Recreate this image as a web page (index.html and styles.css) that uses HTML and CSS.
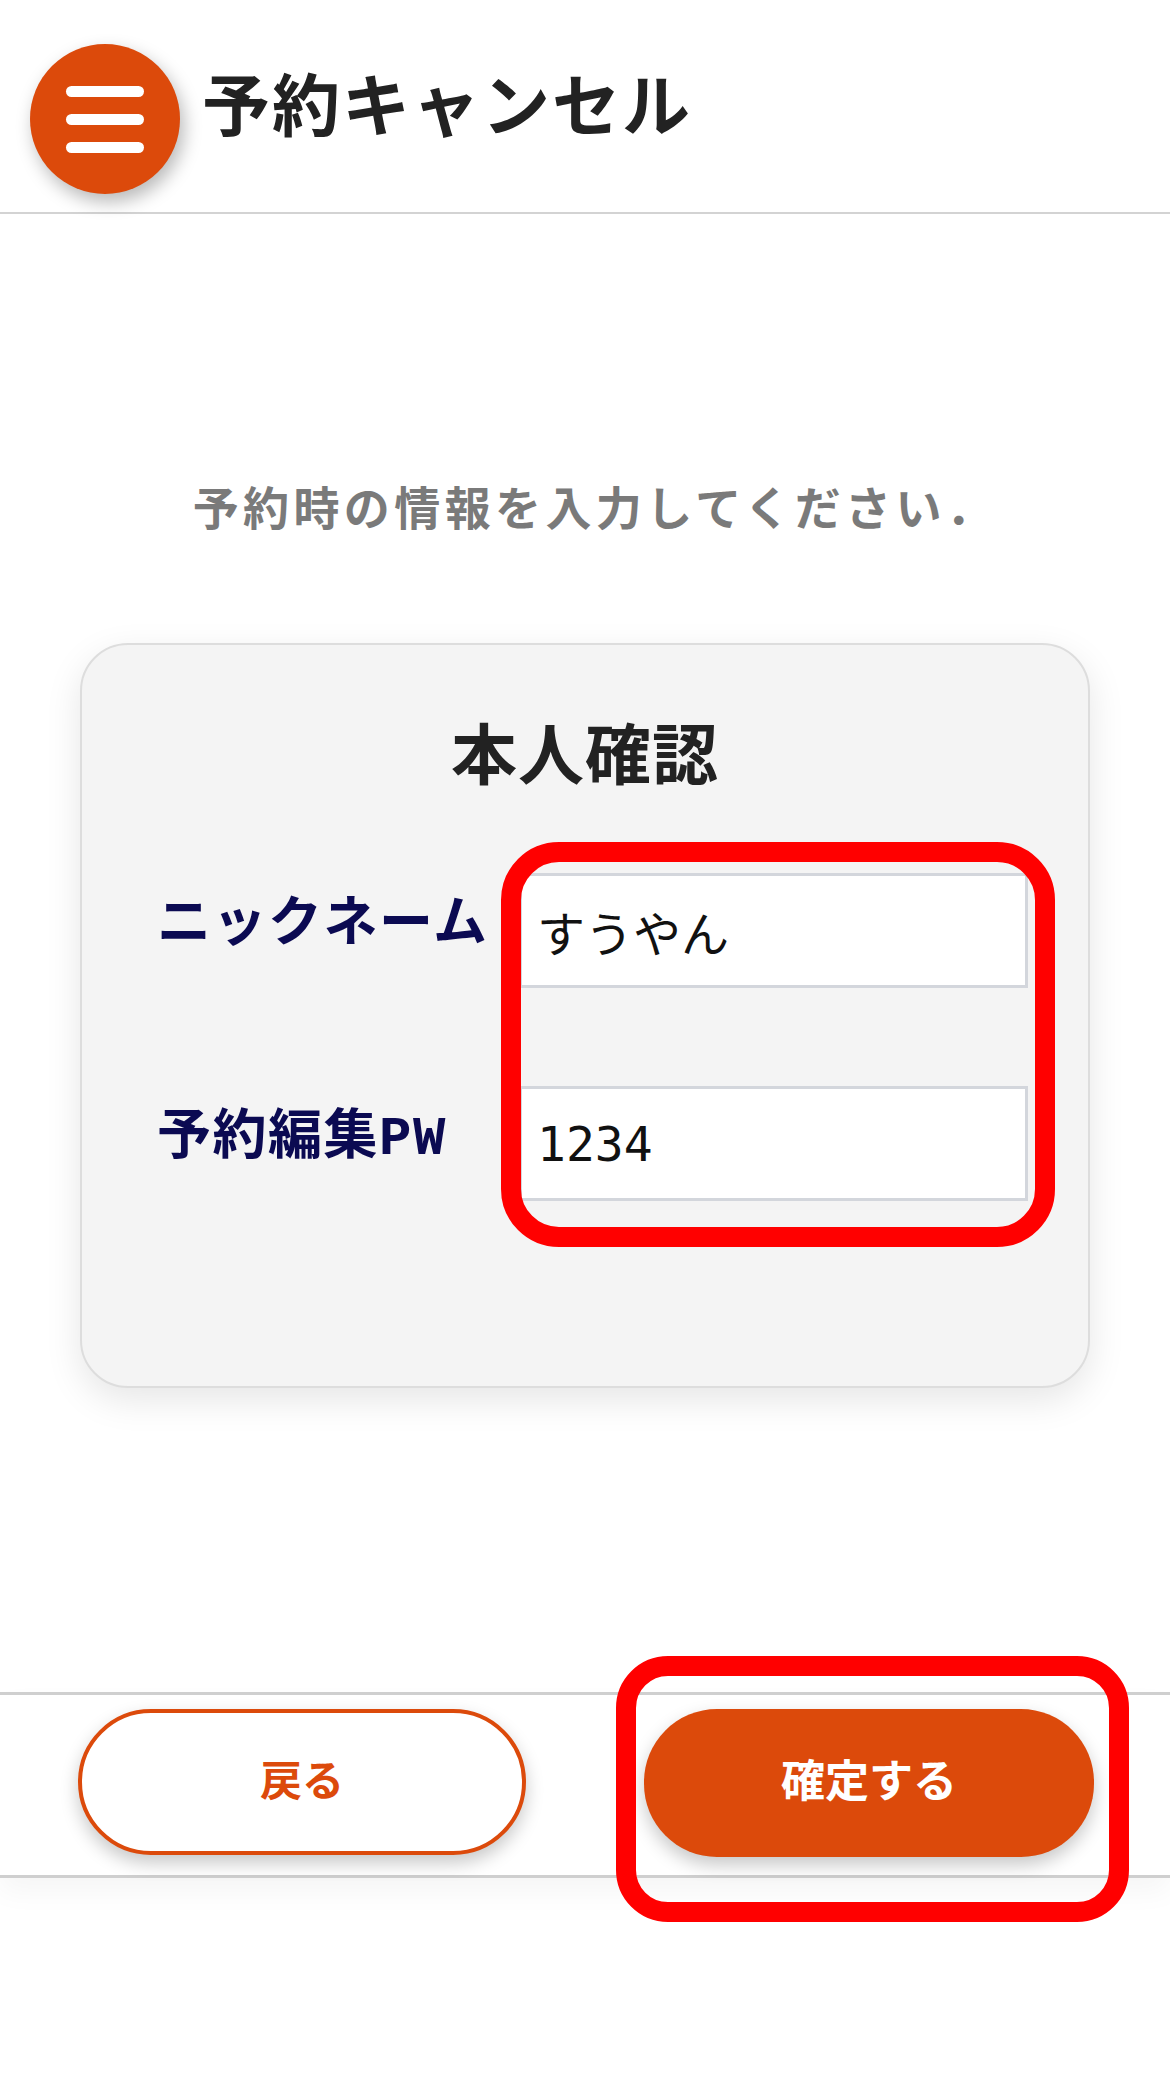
FILE: index.html
```html
<!DOCTYPE html>
<html lang="ja">
<head>
<meta charset="utf-8">
<title>予約キャンセル</title>
<link rel="stylesheet" href="styles.css">
</head>
<body>
<header class="header">
  <button class="menu-btn" aria-label="メニュー">
    <span class="bar"></span>
    <span class="bar"></span>
    <span class="bar"></span>
  </button>
  <h1 class="page-title">予約キャンセル</h1>
</header>

<main class="main">
  <p class="lead">予約時の情報を入力してください．</p>

  <section class="card">
    <h2 class="card-title">本人確認</h2>
    <div class="form-grid">
      <label class="field-label" for="nick">ニックネーム</label>
      <input class="field-input" id="nick" type="text" value="すうやん">
      <label class="field-label" for="pw">予約編集PW</label>
      <input class="field-input" id="pw" type="text" value="1234">
    </div>
    <div class="annot annot-inputs"></div>
  </section>
</main>

<footer class="footer">
  <button class="btn btn-back">戻る</button>
  <button class="btn btn-confirm">確定する</button>
  <div class="annot annot-confirm"></div>
</footer>
</body>
</html>
```
FILE: styles.css
```css
* {
  box-sizing: border-box;
}

html, body {
  margin: 0;
  padding: 0;
  background: #ffffff;
}

body {
  width: 1170px;
  min-height: 2100px;
  font-family: "Noto Sans CJK JP", "Noto Sans", sans-serif;
  color: #222222;
  overflow: hidden;
}

/* Header */
.header {
  height: 214px;
  display: flex;
  align-items: flex-start;
  padding: 44px 0 0 30px;
  border-bottom: 2px solid #d3d3d3;
  gap: 22px;
}

.menu-btn {
  width: 150px;
  height: 150px;
  border-radius: 50%;
  border: none;
  background: #dc4a0b;
  box-shadow: 4px 8px 18px rgba(0, 0, 0, 0.28);
  display: flex;
  flex-direction: column;
  align-items: center;
  justify-content: center;
  gap: 17px;
  padding: 0;
  flex: none;
}

.bar {
  display: block;
  width: 78px;
  height: 11px;
  border-radius: 6px;
  background: #ffffff;
}

.page-title {
  margin: 24px 0 0 0;
  font-size: 68px;
  line-height: 1;
  font-weight: 700;
  color: #222222;
  letter-spacing: 2px;
}

/* Main */
.main {
  display: flex;
  flex-direction: column;
  align-items: center;
}

.lead {
  margin: 264px 0 0 0;
  padding-left: 19px;
  font-size: 46px;
  line-height: 55px;
  font-weight: 700;
  color: #7a7a7a;
  text-align: center;
  letter-spacing: 4.4px;
}

.card {
  position: relative;
  margin-top: 110px;
  width: 1010px;
  height: 745px;
  background: #f4f4f4;
  border: 2px solid #dddddd;
  border-radius: 48px;
  box-shadow: 0 12px 36px rgba(0, 0, 0, 0.10);
  padding: 67px 60px 0 75px;
}

.card-title {
  margin: 0 0 0 -15px;
  text-align: center;
  font-size: 66px;
  line-height: 77px;
  font-weight: 700;
  color: #222222;
  letter-spacing: 1px;
}

.form-grid {
  margin-top: 84px;
  display: grid;
  grid-template-columns: 362px 509px;
  row-gap: 98px;
  align-items: center;
}

.field-label {
  font-family: "Liberation Mono", "Noto Sans CJK JP", monospace;
  font-size: 54px;
  font-weight: 700;
  color: #0b0a52;
  line-height: 1;
  margin-top: -8px;
  letter-spacing: 1.5px;
}

.field-input {
  width: 509px;
  height: 115px;
  border: 3px solid #d3d6dc;
  background: #ffffff;
  padding: 0 0 0 15px;
  font-family: "DejaVu Sans Mono", "Noto Sans CJK JP", monospace;
  font-size: 48px;
  color: #111111;
  border-radius: 0;
  outline: none;
}

/* Annotation overlays */
.annot {
  position: absolute;
  border: 20px solid #ff0000;
  pointer-events: none;
}

.annot-inputs {
  left: 419px;
  top: 197px;
  width: 554px;
  height: 405px;
  border-radius: 58px;
}

/* Footer */
.footer {
  position: relative;
  margin-top: 304px;
  height: 186px;
  border-top: 3px solid #cfcfcf;
  border-bottom: 3px solid #cfcfcf;
  box-shadow: 0 14px 26px rgba(0, 0, 0, 0.04);
  display: flex;
  align-items: flex-start;
  gap: 118px;
  padding: 14px 0 0 78px;
}

.btn {
  height: 146px;
  border-radius: 73px;
  font-family: "Noto Sans CJK JP", "Noto Sans", sans-serif;
  font-weight: 700;
  box-shadow: 0 8px 18px rgba(0, 0, 0, 0.22);
  padding: 0 0 10px 0;
}

.btn-back {
  width: 448px;
  background: #ffffff;
  border: 4px solid #dc4a0b;
  color: #dc4a0b;
  font-size: 42px;
}

.btn-confirm {
  width: 450px;
  height: 148px;
  background: #dc4a0b;
  border: none;
  color: #ffffff;
  font-size: 44px;
}

.annot-confirm {
  left: 616px;
  top: -39px;
  width: 513px;
  height: 266px;
  border-radius: 52px;
}
```
